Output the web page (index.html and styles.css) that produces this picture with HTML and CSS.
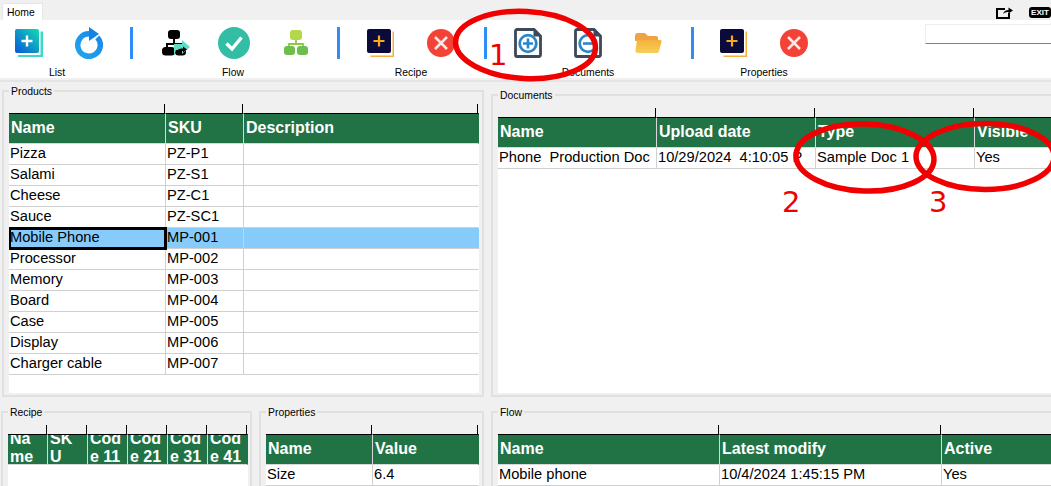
FILE: index.html
```html
<!DOCTYPE html>
<html lang="en">
<head>
<meta charset="utf-8">
<title>Home</title>
<link rel="stylesheet" href="styles.css">
</head>
<body>
<svg class="defs" width="0" height="0" aria-hidden="true">
  <defs>
    <linearGradient id="gList" x1="0" y1="1" x2="1" y2="0"><stop offset="0" stop-color="#0a55d8"/><stop offset="1" stop-color="#12dcb4"/></linearGradient>
    <linearGradient id="gRing" x1="0" y1="1" x2="1" y2="0"><stop offset="0" stop-color="#1fa6ee"/><stop offset="1" stop-color="#1a86ea"/></linearGradient>
    <linearGradient id="gFolder" x1="0" y1="0" x2="0" y2="1"><stop offset="0" stop-color="#f5b13d"/><stop offset="1" stop-color="#f6cf58"/></linearGradient>
    <symbol id="icoAdd" viewBox="0 0 28 30">
      <path d="M25.500 3.500H27V29H3.500V27.500H25.500Z" fill="#f5b041"/>
      <rect x="0" y="1" width="24" height="24" rx="2" fill="#0b0b3b"/>
      <path d="M12 7.500v11M6.500 13h11" stroke="#fba81f" stroke-width="2.200"/>
    </symbol>
    <symbol id="icoClose" viewBox="0 0 28 28">
      <circle cx="14" cy="14" r="14" fill="#f44336"/>
      <path d="M8 8l12 12M20 8L8 20" stroke="#fbe9e7" stroke-width="2.600"/>
    </symbol>
    <symbol id="icoDoc" viewBox="0 0 28 30">
      <path d="M1.500 3a1.500 1.500 0 0 1 1.500-1.500H20l6.500 6.500V27a1.500 1.500 0 0 1-1.500 1.500H3A1.500 1.500 0 0 1 1.500 27Z" fill="#fff" stroke="#3d4858" stroke-width="2.800"/>
      <path d="M19.500 1.500V8.500H26.500Z" fill="#3d4858"/>
      <circle cx="14" cy="15.500" r="8.300" fill="none" stroke="#2a86c8" stroke-width="2.800"/>
    </symbol>
  </defs>
</svg>

<div class="app">
  <div class="tabstrip">
    <span class="tab">Home</span>
    <div class="window-tools">
      <svg class="share" width="17" height="13" viewBox="0 0 17 13">
        <path d="M9 3H1V12H13V7" fill="none" stroke="#000" stroke-width="2"/>
        <path d="M7 8C8 5 10 4 12.500 4V1.500L17 4.500 12.500 7.500V6C10.500 6 8.500 6.500 7 8Z" fill="#000"/>
      </svg>
      <span class="exit">EXIT</span>
    </div>
  </div>

  <div class="ribbon">
    <div class="group g1">
      <div class="icons">
        <svg class="ico" viewBox="0 0 28 30">
          <path d="M25.500 3.500H28V29H3V27H25.500Z" fill="#3fd8c6"/>
          <rect x="0" y="1" width="24" height="24" rx="2" fill="url(#gList)"/>
          <path d="M12 7.500v11M6.500 13h11" stroke="#fff" stroke-width="2.400"/>
        </svg>
        <svg class="ico tall" viewBox="0 0 28 32">
          <path d="M14 6.700A11.300 11.300 0 1 0 22.300 10.300" fill="none" stroke="url(#gRing)" stroke-width="5.500"/>
          <path d="M14 0L24 7 14 14Z" fill="#1583e6"/>
        </svg>
      </div>
      <span class="label shift-list">List</span>
    </div>
    <span class="sep"></span>
    <div class="group g2">
      <div class="icons">
        <svg class="ico" viewBox="0 0 28 30">
          <rect x="6" y="2" width="12" height="9" rx="3" fill="#000"/>
          <path d="M12 10v6M5 21v-5H19v5" fill="none" stroke="#000" stroke-width="2"/>
          <rect x="0" y="19" width="13" height="8.500" rx="3.500" fill="#000"/>
          <rect x="13" y="19" width="11" height="8.500" rx="3.500" fill="#000"/>
          <path d="M12 16H20V12L28 19 20 26V22H14L12 28Z" fill="#5fdcc4"/>
          <path d="M14 25C15 21 18 20 21 20.500V18.500L25 21.500 21 24.500V23C18 22.500 16 23.500 14 25Z" fill="#000"/>
        </svg>
        <svg class="ico wide" viewBox="0 0 32 32">
          <circle cx="16" cy="16" r="16" fill="#32bda4"/>
          <path d="M8.500 16.500L14 22 23.500 10.500" fill="none" stroke="#fff" stroke-width="3.400"/>
        </svg>
        <svg class="ico" viewBox="0 0 28 30">
          <rect x="8" y="2" width="12" height="10" rx="3" fill="#b4d84a"/>
          <path d="M14 12v4M7 19v-3H21v3" fill="none" stroke="#8fc94a" stroke-width="1.800"/>
          <rect x="2" y="18" width="11" height="9" rx="3" fill="#6cbf4b"/>
          <rect x="15" y="18" width="11" height="9" rx="3" fill="#6cbf4b"/>
        </svg>
      </div>
      <span class="label shift-flow">Flow</span>
    </div>
    <span class="sep"></span>
    <div class="group g3">
      <div class="icons">
        <svg class="ico"><use href="#icoAdd"/></svg>
        <svg class="ico"><use href="#icoClose"/></svg>
      </div>
      <span class="label">Recipe</span>
    </div>
    <span class="sep"></span>
    <div class="group g4">
      <div class="icons">
        <svg class="ico"><use href="#icoDoc"/><path d="M14 10.500v10M9 15.500h10" stroke="#2a86c8" stroke-width="2.600"/></svg>
        <svg class="ico"><use href="#icoDoc"/><path d="M9 15.500h10" stroke="#2a86c8" stroke-width="2.600"/></svg>
        <svg class="ico" viewBox="0 0 28 30">
          <path d="M1 8a3 3 0 0 1 3-3h7l3 3h8a2 2 0 0 1 2 2v3H1Z" fill="#f0a344"/>
          <path d="M3 12H26a1.500 1.500 0 0 1 1.500 2L25 23.500A2 2 0 0 1 23 25H4a2.500 2.500 0 0 1-2.500-2.500Z" fill="url(#gFolder)"/>
        </svg>
      </div>
      <span class="label">Documents</span>
    </div>
    <span class="sep"></span>
    <div class="group g5">
      <div class="icons">
        <svg class="ico"><use href="#icoAdd"/></svg>
        <svg class="ico"><use href="#icoClose"/></svg>
      </div>
      <span class="label">Properties</span>
    </div>
    <input class="search" type="text" aria-label="Search">
  </div>

  <div class="panes">
    <div class="col-left">
      <fieldset class="box box-products">
        <legend>Products</legend>
        <div class="sheet">
          <table class="grid">
            <colgroup><col class="c-p1"><col class="c-p2"><col></colgroup>
            <thead>
              <tr class="ticks"><td></td><td></td><td></td></tr>
              <tr class="head"><th>Name</th><th>SKU</th><th>Description</th></tr>
            </thead>
            <tbody>
              <tr><td>Pizza</td><td>PZ-P1</td><td></td></tr>
              <tr><td>Salami</td><td>PZ-S1</td><td></td></tr>
              <tr><td>Cheese</td><td>PZ-C1</td><td></td></tr>
              <tr><td>Sauce</td><td>PZ-SC1</td><td></td></tr>
              <tr class="selected"><td class="current">Mobile Phone</td><td>MP-001</td><td></td></tr>
              <tr><td>Processor</td><td>MP-002</td><td></td></tr>
              <tr><td>Memory</td><td>MP-003</td><td></td></tr>
              <tr><td>Board</td><td>MP-004</td><td></td></tr>
              <tr><td>Case</td><td>MP-005</td><td></td></tr>
              <tr><td>Display</td><td>MP-006</td><td></td></tr>
              <tr><td>Charger cable</td><td>MP-007</td><td></td></tr>
            </tbody>
          </table>
        </div>
      </fieldset>
      <div class="bottom-left">
        <fieldset class="box box-recipe">
          <legend>Recipe</legend>
          <div class="sheet">
            <table class="grid w-recipe">
              <thead>
                <tr class="ticks"><td></td><td></td><td></td><td></td><td></td><td></td></tr>
                <tr class="head narrow"><th><span>Na me</span></th><th><span>SK U</span></th><th><span>Cod e 11</span></th><th><span>Cod e 21</span></th><th><span>Cod e 31</span></th><th><span>Cod e 41</span></th></tr>
              </thead>
            </table>
          </div>
        </fieldset>
        <fieldset class="box box-props">
          <legend>Properties</legend>
          <div class="sheet">
            <table class="grid">
              <colgroup><col class="c-v1"><col></colgroup>
              <thead>
                <tr class="ticks"><td></td><td></td></tr>
                <tr class="head"><th>Name</th><th>Value</th></tr>
              </thead>
              <tbody><tr><td>Size</td><td>6.4</td></tr></tbody>
            </table>
          </div>
        </fieldset>
      </div>
    </div>
    <div class="col-right">
      <fieldset class="box box-docs">
        <legend>Documents</legend>
        <div class="sheet">
          <table class="grid w-wide">
            <colgroup><col class="c-d"><col class="c-d"><col class="c-d"><col class="c-d"></colgroup>
            <thead>
              <tr class="ticks"><td></td><td></td><td></td><td></td></tr>
              <tr class="head"><th>Name</th><th>Upload date</th><th>Type</th><th>Visible</th></tr>
            </thead>
            <tbody><tr><td>Phone&nbsp; Production Doc</td><td>10/29/2024&nbsp; 4:10:05 P</td><td>Sample Doc 1</td><td>Yes</td></tr></tbody>
          </table>
        </div>
      </fieldset>
      <fieldset class="box box-flow">
        <legend>Flow</legend>
        <div class="sheet">
          <table class="grid w-wide">
            <colgroup><col class="c-f"><col class="c-f"><col class="c-f3"></colgroup>
            <thead>
              <tr class="ticks"><td></td><td></td><td></td></tr>
              <tr class="head"><th>Name</th><th>Latest modify</th><th>Active</th></tr>
            </thead>
            <tbody><tr><td>Mobile phone</td><td>10/4/2024 1:45:15 PM</td><td>Yes</td></tr></tbody>
          </table>
        </div>
      </fieldset>
    </div>
  </div>

  <svg class="marks" viewBox="0 0 1051 486" width="1051" height="486" aria-hidden="true">
    <g fill="none" stroke="#f00000" stroke-width="5.500">
      <ellipse cx="525.500" cy="45" rx="70" ry="33.500" transform="rotate(3 525.500 45)"/>
      <ellipse cx="865" cy="157.500" rx="69" ry="33.500" transform="rotate(2 865 157.500)"/>
      <ellipse cx="985" cy="156.500" rx="69" ry="33"/>
    </g>
  </svg>
  <span class="mark-num n1">1</span>
  <span class="mark-num n2">2</span>
  <span class="mark-num n3">3</span>
</div>
</body>
</html>
```

FILE: styles.css
```css
* { box-sizing: border-box; }
html, body { margin: 0; padding: 0; width: 1051px; height: 486px; overflow: hidden; background: #f0f0f0; }
body { font-family: "Liberation Sans", Arial, sans-serif; color: #000; }
.defs { position: absolute; }

.app { position: relative; width: 1051px; height: 486px; overflow: hidden; }

/* tab strip */
.tabstrip { height: 20px; display: flex; align-items: flex-end; padding-left: 2px; }
.tab { width: 41px; height: 17px; background: #fff; padding-left: 4px; font-size: 10.4px; line-height: 17px; border: 1px solid #e6e6e6; border-bottom: 0; }
.window-tools { margin-left: auto; display: flex; align-items: center; gap: 16px; height: 13px; margin-bottom: 1px; }
.share { display: block; }
.exit { width: 22px; height: 11px; background: #000; color: #fff; border-radius: 3px; font-size: 8px; font-weight: 700; line-height: 11px; text-align: center; }

/* ribbon */
.ribbon { height: 58px; background: #fff; display: flex; align-items: flex-start; }
.group { display: flex; flex-direction: column; align-items: center; padding-top: 7px; }
.icons { display: flex; gap: 32px; height: 32px; flex-shrink: 0; align-items: center; }
.ico { width: 28px; height: 30px; display: block; }
.ico.tall { height: 32px; }
.ico.wide { width: 32px; height: 32px; margin: 0 0 0 -4px; }
.label { font-size: 10.4px; line-height: 13px; margin-top: 7px; }
.shift-list { position: relative; left: -2px; }
.shift-flow { position: relative; left: -3px; }
.sep { width: 3px; height: 32px; margin-top: 7px; background: #2f8df5; }
.g1 { margin-left: 15px; margin-right: 27px; }
.g2 { margin-left: 29px; margin-right: 27px; }
.g3 { margin-left: 27px; margin-right: 29px; }
.g4 { margin-left: 27px; margin-right: 29px; }
.g5 { margin-left: 26px; }
.search { width: 126px; height: 20px; margin-left: auto; margin-top: 4px; background: #fff; border: 0; border-top: 1px solid #eee; border-left: 1px solid #eee; border-bottom: 1px solid #808080; padding: 0; }

/* panes */
.panes { margin-top: 2px; border-top: 2px solid #e4e4e4; display: grid; grid-template-columns: 491px 640px; height: 406px; }
.col-left, .col-right { display: flex; flex-direction: column; }
.col-left { padding-left: 2px; }

.box { margin: 0; min-width: 0; border: 2px solid #e0e0e0; padding: 6px 5px 2px 5px; }
.box legend { font-size: 10.4px; line-height: 13px; padding: 2px 2px 0; }
.sheet { background: #fff; overflow: hidden; }

.box-products { margin-top: 1px; height: 314px; width: 482px; padding-right: 3px; }
.box-products .sheet { height: 289px; }
.box-docs { margin-top: 5px; height: 310px; width: 640px; }
.box-docs .sheet { height: 285px; }
.bottom-left { display: flex; gap: 7px; margin-top: 7px; }
.box-recipe { width: 251px; height: 100px; margin-left: -1px; padding-right: 2px; }
.box-props { width: 225px; height: 100px; padding-right: 3px; }
.box-recipe .sheet, .box-props .sheet, .box-flow .sheet { height: 80px; }
.box-flow { margin-top: 7px; height: 100px; width: 640px; }

/* data grids */
.grid { table-layout: fixed; border-collapse: separate; border-spacing: 0; width: 100%; font-size: 14.67px; }
.w-wide { width: 632px; }
.w-recipe { width: 240px; }
.c-p1 { width: 157px; }
.c-p2 { width: 78px; }
.c-v1 { width: 107px; }
.c-d { width: 159px; }
.c-f { width: 222px; }
.c-f3 { width: 188px; }

.ticks td { height: 9px; padding: 0; background: #f0f0f0 linear-gradient(#000, #000) no-repeat calc(100% - 1px) 0 / 1px 100%; }
.head th { height: 31px; padding: 0 2px 2px; background: #217346; color: #fff; font-size: 16px; font-weight: 700; text-align: left; border-top: 1px solid #000; border-right: 1px solid #d8d8d8; border-bottom: 1px solid #d8d8d8; overflow: hidden; white-space: nowrap; line-height: 18px; }
.head th:last-child, .grid td:last-child { border-right-color: transparent; }
.grid tbody td { height: 21px; padding: 0 1px 2px; line-height: 18px; background: #fff; border-right: 1px solid #d0d0d0; border-bottom: 1px solid #d0d0d0; overflow: hidden; white-space: nowrap; }
.grid .selected td { background: #87cbfb; }
.grid .selected .current { outline: 3px solid #000; outline-offset: -2px; }

.head.narrow th { white-space: normal; padding: 0 0 0 2px; line-height: 18px; }
.head.narrow th span { height: 29px; display: flex; flex-direction: column; justify-content: flex-end; transform: translateY(2px); }

/* annotations */
.marks { position: absolute; left: 0; top: 0; pointer-events: none; }
.mark-num { position: absolute; color: #f00000; font-family: "DejaVu Sans", sans-serif; font-size: 29px; line-height: 30px; }
.n1 { left: 489px; top: 40px; }
.n2 { left: 782px; top: 187px; }
.n3 { left: 929px; top: 187px; }
```
